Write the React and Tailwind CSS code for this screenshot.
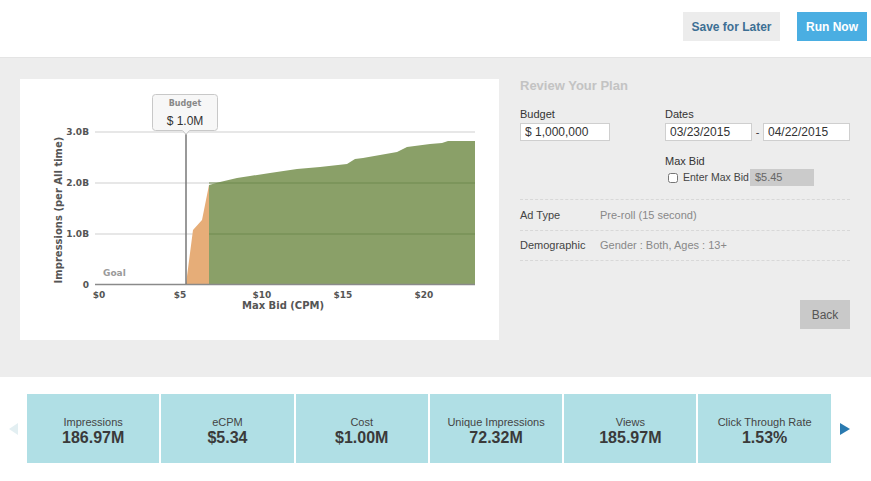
import { useState } from 'react';

const metrics = [
  { label: 'Impressions', value: '186.97M' },
  { label: 'eCPM', value: '$5.34' },
  { label: 'Cost', value: '$1.00M' },
  { label: 'Unique Impressions', value: '72.32M' },
  { label: 'Views', value: '185.97M' },
  { label: 'Click Through Rate', value: '1.53%' },
];

const greenPts = [
  [209, 284], [209, 185], [220, 182], [237, 178], [250, 176], [270, 173], [297, 169],
  [320, 167], [347, 164], [355, 159], [363, 158], [380, 155], [397, 152], [407, 147],
  [430, 144], [442, 143], [448, 141], [475, 141], [475, 284],
];
const orangePts = [[186, 284], [193, 230], [202, 220], [209, 185], [209, 284]];
const toPts = pts => pts.map(p => p.join(',')).join(' ');

function Chart() {
  const axis = { fontFamily: 'DejaVu Sans, sans-serif', fontSize: 9, fontWeight: 700, fill: '#555' };
  return (
    <svg width="479" height="261" viewBox="20 79 479 261">
      {[132, 183, 234].map(y => (
        <line key={y} x1="95" x2="475" y1={y} y2={y} stroke="#cfcfcf" strokeWidth="1" />
      ))}
      <polygon points={toPts(orangePts)} fill="#e6ad78" />
      <polygon points={toPts(greenPts)} fill="#8aa068" />
      {[183, 234].map(y => (
        <line key={y} x1="209" x2="475" y1={y} y2={y} stroke="#6f8a4f" strokeWidth="1" />
      ))}
      <line x1="95" x2="475" y1="284.5" y2="284.5" stroke="#8a8a8a" strokeWidth="1.5" />
      <line x1="186" x2="186" y1="131" y2="284" stroke="#777" strokeWidth="1.5" />
      {[['3.0B', 135], ['2.0B', 186], ['1.0B', 237], ['0', 288]].map(([t, y]) => (
        <text key={t} x="89" y={y} textAnchor="end" style={axis}>{t}</text>
      ))}
      {[['$0', 99], ['$5', 180], ['$10', 262], ['$15', 343], ['$20', 424]].map(([t, x]) => (
        <text key={t} x={x} y="298" textAnchor="middle" style={axis}>{t}</text>
      ))}
      <text x="283" y="309" textAnchor="middle" style={{ ...axis, fontSize: 10 }}>Max Bid (CPM)</text>
      <text x="0" y="0" transform="translate(62,210) rotate(-90)" textAnchor="middle" style={{ ...axis, fontSize: 10 }}>
        Impressions (per All time)
      </text>
      <text x="103" y="276" style={{ fontFamily: 'DejaVu Sans, sans-serif', fontSize: 9, fontWeight: 700, fill: '#9a9a9a' }}>Goal</text>
      <path d="M155.5 94.5 h59 a3 3 0 0 1 3 3 v30 a3 3 0 0 1 -3 3 h-25 l-3.5 4 l-3.5 -4 h-27 a3 3 0 0 1 -3 -3 v-30 a3 3 0 0 1 3 -3 z"
        fill="#f7f7f7" stroke="#c8c8c8" strokeWidth="1" />
      <text x="185" y="106" textAnchor="middle" style={{ fontFamily: 'DejaVu Sans, sans-serif', fontSize: 8, fontWeight: 700, fill: '#888' }}>Budget</text>
      <text x="185" y="125" textAnchor="middle" style={{ fontFamily: 'Liberation Sans, sans-serif', fontSize: 12, fill: '#333' }}>$ 1.0M</text>
    </svg>
  );
}

export default function App() {
  const [maxBid, setMaxBid] = useState(false);
  const inputClass = "h-[18px] border border-[#cfcfcf] bg-white px-[4px] text-[12px] text-[#333] outline-none";

  return (
    <div className="w-[871px] h-[481px] bg-white text-[#333]" style={{ fontFamily: '"Liberation Sans", Arial, sans-serif' }}>
      <div className="h-[57px] flex justify-end items-start pt-[12px] pr-[4px] gap-[17px]">
        <button className="w-[97px] h-[29px] bg-[#ececec] text-[#3d6f94] text-[12px] font-bold">Save for Later</button>
        <button className="w-[70px] h-[29px] bg-[#4aaee2] text-white text-[12px] font-bold">Run Now</button>
      </div>

      <div className="h-[320px] bg-[#ededed] border-t border-[#e4e4e4] flex pt-[21px] pl-[20px]">
        <div className="w-[479px] h-[261px] bg-white">
          <Chart />
        </div>

        <div className="ml-[21px] w-[330px] text-[11px]">
          <div className="text-[13px] font-bold text-[#c3c3c3] mt-[-1px] leading-[16px]">Review Your Plan</div>
          <div className="flex mt-[13px]">
            <div className="w-[145px]">
              <div className="leading-[14px] mb-[2px]">Budget</div>
              <input className={`${inputClass} w-[90px]`} defaultValue="$ 1,000,000" />
            </div>
            <div>
              <div className="leading-[14px] mb-[2px]">Dates</div>
              <div className="flex items-center">
                <input className={`${inputClass} w-[87px]`} defaultValue="03/23/2015" />
                <span className="w-[11px] text-center">-</span>
                <input className={`${inputClass} w-[87px]`} defaultValue="04/22/2015" />
              </div>
              <div className="leading-[14px] mt-[13px]">Max Bid</div>
              <div className="flex items-center mt-[1px]">
                <input type="checkbox" checked={maxBid} onChange={e => setMaxBid(e.target.checked)}
                  className="w-[10px] h-[10px] ml-[3px] mr-[5px] accent-[#4aaee2]" />
                <span className="text-[#444] text-[10.5px]">Enter Max Bid</span>
                <div className="ml-[1px] w-[64px] h-[17px] bg-[#cbcbcb] px-[5px] leading-[17px] text-[#666]">$5.45</div>
              </div>
            </div>
          </div>
          <div className="mt-[13px] border-t border-dashed border-[#d8d8d8]" />
          <div className="flex h-[31px] items-center pt-[1px] border-b border-dashed border-[#d8d8d8]">
            <span className="w-[80px] text-[#444]">Ad Type</span>
            <span className="text-[#888]">Pre-roll (15 second)</span>
          </div>
          <div className="flex h-[30px] items-center border-b border-dashed border-[#d8d8d8]">
            <span className="w-[80px] text-[#444]">Demographic</span>
            <span className="text-[#888]">Gender : Both, Ages : 13+</span>
          </div>
          <div className="flex justify-end mt-[39px]">
            <button className="w-[50px] h-[29px] bg-[#c9c9c9] text-[#555] text-[12px]">Back</button>
          </div>
        </div>
      </div>

      <div className="flex items-center pt-[17px]">
        <div className="w-[27px] flex justify-center">
          <div className="w-0 h-0 border-y-[6px] border-y-transparent border-r-[9px] border-r-[#e3eff2]" />
        </div>
        <div className="flex gap-[2px]">
          {metrics.map(m => (
            <div key={m.label} className="w-[132.3px] h-[69px] bg-[#b0dfe5] flex flex-col items-center justify-center pt-[4px]">
              <div className="text-[11px] text-[#444] leading-[14px]">{m.label}</div>
              <div className="text-[16px] font-bold text-[#3a3a3a] leading-[18px]">{m.value}</div>
            </div>
          ))}
        </div>
        <div className="ml-[9px] w-0 h-0 border-y-[6px] border-y-transparent border-l-[10px] border-l-[#2a7ab0]" />
      </div>
    </div>
  );
}
